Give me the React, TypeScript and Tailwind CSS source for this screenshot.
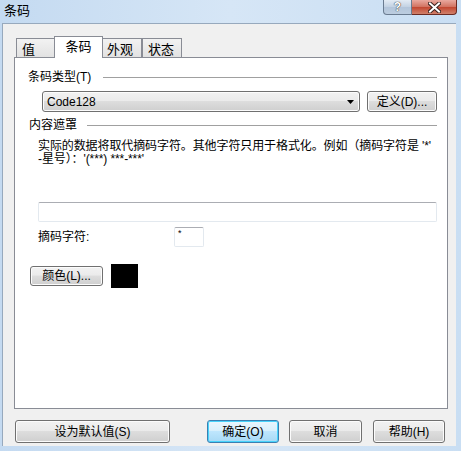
import React from "react";

const font = "font-['Liberation_Sans','Noto_Sans_CJK_SC',sans-serif]";
const face =
  "rounded-[3px] border border-[#707070] bg-[linear-gradient(to_bottom,#f2f2f2_0%,#ebebeb_45%,#dddddd_50%,#cfcfcf_100%)] text-[12px] text-black shadow-[inset_0_0_0_1px_#fcfcfc]";
const btn = `flex items-center justify-center ${face}`;

function GroupHeader({ label, lineFrom }: { label: string; lineFrom: number }) {
  return (
    <div className="flex h-[12px] items-center pr-[10px]">
      <span className="text-[12px] leading-[12px] text-black">{label}</span>
      <div className="flex-1 border-t border-[#a0a0a0]" style={{ marginLeft: lineFrom }} />
    </div>
  );
}

function Tab({ label, active, w }: { label: string; active?: boolean; w: string }) {
  return active ? (
    <div
      className={`relative z-10 -mx-[2px] -mb-px flex h-[22px] items-start justify-center border border-b-0 border-[#898c95] bg-white pt-[3px] text-[13px] leading-[14px] ${w}`}
    >
      {label}
    </div>
  ) : (
    <div
      className={`flex h-[19px] items-start border border-b-0 border-[#898c95] bg-[linear-gradient(to_bottom,#f2f2f2,#e2e2e2)] pl-[5px] pt-[4px] text-[13px] leading-[14px] ${w}`}
    >
      {label}
    </div>
  );
}

export default function App() {
  return (
    <div className={`flex h-[451px] w-[461px] flex-col overflow-hidden bg-[linear-gradient(to_right,#c4daf1,#d6e6f6_50%,#c9def3)] text-black ${font}`}>
      {/* title bar */}
      <div className="flex h-[23px] shrink-0 items-start">
        <span className="ml-[4px] mt-[4px] text-[13px] leading-[14px] text-black">条码</span>
        <div className="ml-auto mr-[4px] flex h-[15px]">
          <div className="flex w-[29px] items-center justify-center rounded-bl-[4px] border border-t-0 border-[#6a7b90] bg-[linear-gradient(to_bottom,#e3ebf4,#c2d1e2_50%,#b3c5da_50%,#bccde0)]">
            <span className="text-[12px] font-bold leading-[12px] text-white [text-shadow:0_0_1px_#333,0_0_1px_#333]">?</span>
          </div>
          <div className="flex w-[45px] items-center justify-center rounded-br-[4px] border border-l-0 border-t-0 border-[#6b2a22] bg-[linear-gradient(to_bottom,#e9a99f,#d1715f_50%,#c2452f_50%,#d0806a)]">
            <svg width="13" height="11" viewBox="0 0 13 11">
              <path d="M2 1.5 L11 9.5 M11 1.5 L2 9.5" stroke="#3b2320" strokeWidth="4" strokeLinecap="square" />
              <path d="M2 1.5 L11 9.5 M11 1.5 L2 9.5" stroke="#ffffff" strokeWidth="2" strokeLinecap="square" />
            </svg>
          </div>
        </div>
      </div>

      {/* client area */}
      <div className="mb-[5px] ml-[2px] mr-[5px] flex flex-1 flex-col border-l border-t border-[#97a9bd] bg-[#f0f0f0] pl-[11px] pt-[12px]">
        {/* tabs */}
        <div className="flex h-[21px] items-end pl-[2px]">
          <Tab label="值" w="w-[40px]" />
          <Tab label="条码" active w="w-[49px]" />
          <Tab label="外观" w="w-[41px]" />
          <Tab label="状态" w="w-[40px]" />
        </div>

        {/* panel */}
        <div className="flex h-[352px] w-[434px] flex-col border border-[#898c95] bg-white">
          <div className="mt-[13px] pl-[13px]">
            <GroupHeader label="条码类型(T)" lineFrom={12} />
          </div>

          <div className="ml-[27px] mt-[8px] flex items-center gap-[7px]">
            <div className={`${face} flex h-[21px] w-[318px] items-center justify-between pl-[4px] pr-[5px]`}>
              <span className="text-[12px]">Code128</span>
              <svg width="7" height="4" viewBox="0 0 7 4">
                <path d="M0 0 H7 L3.5 4 Z" fill="#000" />
              </svg>
            </div>
            <div className={`${btn} h-[21px] w-[70px]`}>定义(D)...</div>
          </div>

          <div className="mt-[7px] pl-[14px]">
            <GroupHeader label="内容遮罩" lineFrom={10} />
          </div>

          <p className="ml-[23px] mt-[9px] text-[12px] leading-[13px] tracking-[-0.1px]">
            实际的数据将取代摘码字符。其他字符只用于格式化。例如（摘码字符是 '*'
            <br />
            -星号）：'(***) ***-***'
          </p>

          <div className="ml-[23px] mr-[10px] mt-[36px] h-[20px] rounded-[2px] border border-[#e3e9ef] border-t-[#abadb3] bg-white" />

          <div className="ml-[23px] mt-[5px] flex items-center">
            <span className="w-[136px] text-[12px]">摘码字符:</span>
            <div className="h-[20px] w-[30px] rounded-[2px] border border-[#e3e9ef] border-t-[#abadb3] bg-white pl-[3px] text-[9px] leading-[10px]">
              *
            </div>
          </div>

          <div className="ml-[15px] mt-[17px] flex items-center gap-[8px]">
            <div className={`${btn} h-[20px] w-[73px]`}>颜色(L)...</div>
            <div className="h-[24px] w-[27px] bg-black" />
          </div>
        </div>

        {/* bottom buttons */}
        <div className="mt-[11px] flex pl-[1px]">
          <div className={`${btn} h-[23px] w-[155px]`}>设为默认值(S)</div>
          <div className="ml-[37px] flex h-[23px] w-[72px] items-center justify-center rounded-[3px] border border-[#3c7fb1] bg-[linear-gradient(to_bottom,#eaf6fd_0%,#d9f0fc_45%,#bee6fd_50%,#a7d9f5_100%)] text-[12px] shadow-[inset_0_0_0_1px_#48d3fb]">
            确定(O)
          </div>
          <div className={`${btn} ml-[10px] h-[23px] w-[73px]`}>取消</div>
          <div className={`${btn} ml-[11px] h-[23px] w-[72px]`}>帮助(H)</div>
        </div>
      </div>
    </div>
  );
}
